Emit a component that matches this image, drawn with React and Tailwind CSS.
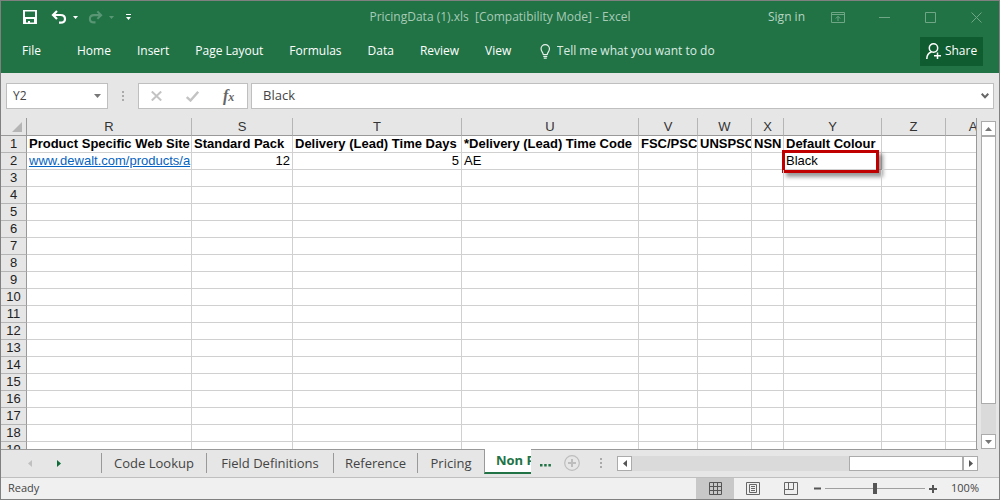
import React, { useLayoutEffect, useRef, useState } from 'react';

const baseColumns = [
  { id: 'R', w: 165 },
  { id: 'S', w: 101 },
  { id: 'T', w: 169 },
  { id: 'U', w: 177 },
  { id: 'V', w: 59 },
  { id: 'W', w: 54 },
  { id: 'X', w: 32 },
  { id: 'Y', w: 98 },
  { id: 'Z', w: 64 },
];

const ROW_HEADER_WIDTH = 26;
const COLUMN_WIDTH = 64;
const ROW_HEIGHT = 17;

const headings = {
  R: 'Product Specific Web Site',
  S: 'Standard Pack',
  T: 'Delivery (Lead) Time Days',
  U: '*Delivery (Lead) Time Code',
  V: 'FSC/PSC',
  W: 'UNSPSC',
  X: 'NSN',
  Y: 'Default Colour',
};

const menu = ['Home', 'Insert', 'Page Layout', 'Formulas', 'Data', 'Review', 'View'];

function sumWidths(columns) {
  return columns.reduce((total, c) => total + c.w, ROW_HEADER_WIDTH);
}

// Columns needed to fill the given width, continuing with AA, AB, AC ...
function columnsFor(width) {
  const columns = [...baseColumns];
  for (let i = 0; sumWidths(columns) < width; i++) {
    const id = String.fromCharCode(65 + Math.floor(i / 26)) + String.fromCharCode(65 + (i % 26));
    columns.push({ id, w: COLUMN_WIDTH });
  }
  return columns;
}

function TitleBar() {
  return (
    <div className="relative flex h-8 items-center">
      <div className="flex items-center pl-[22px]">
        <button aria-label="Save" className="block">
          <svg width="14" height="14" viewBox="0 0 14 14" fill="#fff" fillRule="evenodd">
            <path d="M0 0H14V14H0ZM2 1.500V7H12V1.500ZM3 9V12.500H5V11H7V12.500H11V9Z" />
          </svg>
        </button>
        <button aria-label="Undo" className="ml-[14px] flex items-center gap-[6px]">
          <svg width="16" height="14" viewBox="0 0 16 14" fill="none" stroke="#fff" strokeWidth="2.200">
            <path d="M6 1L2 5L6 9M2.500 5H9.500C12.500 5 14 6.800 14 9C14 11.300 12.300 12.700 9.500 12.700H8" />
          </svg>
          <svg width="5" height="3" viewBox="0 0 5 3" fill="#fff"><path d="M0 0H5L2.500 3Z" /></svg>
        </button>
        <button aria-label="Redo" className="ml-[10px] flex items-center gap-[6px] opacity-25">
          <svg width="15" height="14" viewBox="0 0 16 14" fill="none" stroke="#fff" strokeWidth="2.200">
            <path d="M10 1L14 5L10 9M13.500 5H6.500C3.500 5 2 6.800 2 9C2 11.300 3.700 12.700 6.500 12.700H8" />
          </svg>
          <svg width="5" height="3" viewBox="0 0 5 3" fill="#fff"><path d="M0 0H5L2.500 3Z" /></svg>
        </button>
        <button aria-label="Customize Quick Access Toolbar" className="ml-3 block">
          <svg width="5" height="6" viewBox="0 0 5 6" fill="#fff"><path d="M0 0H5V1H0ZM0 3H5L2.500 6Z" /></svg>
        </button>
      </div>
      <h1 className="pointer-events-none absolute inset-x-0 text-center text-xs whitespace-pre text-[#a8cbb6]">
        {'PricingData (1).xls  [Compatibility Mode] - Excel'}
      </h1>
      <div className="ml-auto flex items-center pr-[17px] text-[#6fa686]">
        <button className="text-xs text-[#b5d3c1]">Sign in</button>
        <button aria-label="Ribbon Display Options" className="ml-[26px] block">
          <svg width="14" height="11" viewBox="0 0 14 11" fill="none" stroke="currentColor">
            <path d="M.5 .5H13.500V10.500H.5ZM.5 2.500H13.500M7 9V4.500M4.800 6.500L7 4.300L9.200 6.500" />
          </svg>
        </button>
        <button aria-label="Minimize" className="ml-[34px] block">
          <svg width="11" height="11" viewBox="0 0 11 11" fill="none" stroke="currentColor"><path d="M0 5.500H11" /></svg>
        </button>
        <button aria-label="Maximize" className="ml-[35px] block">
          <svg width="11" height="11" viewBox="0 0 11 11" fill="none" stroke="currentColor"><path d="M.5 .5H10.500V10.500H.5Z" /></svg>
        </button>
        <button aria-label="Close" className="ml-[35px] block">
          <svg width="11" height="11" viewBox="0 0 11 11" fill="none" stroke="currentColor"><path d="M.5 .5L10.500 10.500M10.500 .5L.5 10.500" /></svg>
        </button>
      </div>
    </div>
  );
}

function RibbonTabs() {
  return (
    <nav className="flex h-10 items-center pb-1 text-xs text-white">
      <button className="ml-[21px]">File</button>
      <div className="ml-9 flex gap-[26px]">
        {menu.map((m) => (
          <button key={m}>{m}</button>
        ))}
      </div>
      <label className="ml-[29px] flex flex-1 items-center gap-[6px]">
        <svg width="11" height="15" viewBox="0 0 10 15" fill="none" stroke="#e6f0ea" strokeWidth="1.200">
          <path d="M3 10.500C3 8.500 .8 7.500 .8 4.800C.8 2.500 2.600 .7 5 .7S9.200 2.500 9.200 4.800C9.200 7.500 7 8.500 7 10.500ZM3 12.300H7M3.500 14.200H6.500" />
        </svg>
        <input
          aria-label="Tell me what you want to do"
          placeholder="Tell me what you want to do"
          className="w-full min-w-0 bg-transparent outline-none placeholder:text-[#dcebe2]"
        />
      </label>
      <button className="mr-4 flex h-[29px] w-[63px] items-center justify-center gap-1 bg-[#0e5c2f]">
        <svg width="15" height="16" viewBox="0 0 15 16" fill="none" stroke="#fff" strokeWidth="1.500">
          <circle cx="7.500" cy="5" r="4.200" />
          <path d="M.8 16C.8 12 2.800 9.800 5.500 9M11.500 9.500V16M8 12.700H15" />
        </svg>
        Share
      </button>
    </nav>
  );
}

function FormulaBar() {
  return (
    <div className="flex h-[45px] items-start px-[5px] pt-[10px]">
      <div className="flex h-[26px] w-[102px] items-center border border-[#bfbfbf] bg-white">
        <input aria-label="Name Box" defaultValue="Y2" className="w-full min-w-0 bg-transparent pl-[6px] text-xs text-[#444] outline-none" />
        <button aria-label="Name list" className="mr-[6px] block">
          <svg width="7" height="4" viewBox="0 0 7 4" fill="#777"><path d="M0 0H7L3.500 4Z" /></svg>
        </button>
      </div>
      <svg className="mx-[14px] mt-2" width="2" height="10" viewBox="0 0 2 10" fill="#aaa">
        <path d="M0 0H2V2H0ZM0 4H2V6H0ZM0 8H2V10H0Z" />
      </svg>
      <div className="flex h-[26px] w-[110px] items-center border border-[#bfbfbf] bg-white">
        <button aria-label="Cancel" className="ml-3 block">
          <svg width="11" height="10" viewBox="0 0 11 10" fill="none" stroke="#c3c3c3" strokeWidth="2"><path d="M.8 .5L10.200 9.500M10.200 .5L.8 9.500" /></svg>
        </button>
        <button aria-label="Enter" className="ml-6 block">
          <svg width="13" height="11" viewBox="0 0 13 11" fill="none" stroke="#c3c3c3" strokeWidth="2.400"><path d="M.8 6L4.500 9.500L12.200 .8" /></svg>
        </button>
        <button aria-label="Insert Function" className="ml-6 font-['Liberation_Serif',serif] text-base leading-4 font-bold text-[#666] italic">
          f<span className="text-xs">x</span>
        </button>
      </div>
      <div className="ml-[3px] flex h-[26px] flex-1 items-center border border-[#bfbfbf] bg-white">
        <input aria-label="Formula" defaultValue="Black" className="w-full min-w-0 bg-transparent pl-[11px] text-[13px] text-[#444] outline-none" />
        <button aria-label="Expand formula bar" className="mr-1 block">
          <svg width="8" height="6" viewBox="0 0 8 6" fill="none" stroke="#666" strokeWidth="2"><path d="M.7 .8L4 4.200L7.300 .8" /></svg>
        </button>
      </div>
    </div>
  );
}

function cellContent(row, id) {
  if (row === 1) return headings[id];
  if (row !== 2) return null;
  if (id === 'R')
    return (
      <a href="#products" className="block overflow-hidden text-[#0563c1] underline">
        www.dewalt.com/products/a
      </a>
    );
  if (id === 'S') return '12';
  if (id === 'T') return '5';
  if (id === 'U') return 'AE';
  if (id === 'Y')
    return (
      <>
        Black
        <span className="pointer-events-none absolute -top-[3px] -left-[2px] h-[23px] w-[97px] border-3 border-[#c00000] shadow-[4px_4px_4px_rgba(0,0,0,0.4)]" />
      </>
    );
  return null;
}

function Sheet() {
  const ref = useRef(null);
  const [size, setSize] = useState({ width: 0, height: 0 });

  useLayoutEffect(() => {
    const measure = () => setSize({ width: ref.current.clientWidth, height: ref.current.clientHeight });
    measure();
    window.addEventListener('resize', measure);
    return () => window.removeEventListener('resize', measure);
  }, []);

  const columns = columnsFor(size.width);
  const rowCount = Math.max(2, Math.ceil((size.height - 18) / ROW_HEIGHT));
  const rows = Array.from({ length: rowCount }, (_, i) => i + 1);

  return (
    <div ref={ref} className="min-w-0 flex-1 overflow-hidden border-r border-[#999] bg-white">
      <table
        style={{ width: sumWidths(columns) }}
        className="table-fixed border-separate border-spacing-0 font-['Liberation_Sans',Arial,sans-serif] text-[13px] leading-4 text-black"
      >
        <colgroup>
          <col style={{ width: ROW_HEADER_WIDTH }} />
          {columns.map((c) => (
            <col key={c.id} style={{ width: c.w }} />
          ))}
        </colgroup>
        <thead>
          <tr className="h-[18px] bg-[#e6e6e6]">
            <th aria-label="Select all" className="border-r border-b border-[#999] p-0">
              <svg className="mr-1 ml-auto" width="10" height="10" viewBox="0 0 10 10" fill="#b5b5b5"><path d="M10 0V10H0Z" /></svg>
            </th>
            {columns.map((c) => (
              <th key={c.id} scope="col" className="border-r border-b border-r-[#b5b5b5] border-b-[#999] p-0 font-normal text-[#333]">
                {c.id}
              </th>
            ))}
          </tr>
        </thead>
        <tbody>
          {rows.map((r) => (
            <tr key={r} className="h-[17px]">
              <th scope="row" className="border-r border-b border-r-[#999] border-b-[#b5b5b5] bg-[#e6e6e6] p-0 font-normal text-[#222]">
                {r}
              </th>
              {columns.map((c) => (
                <td
                  key={c.id}
                  className={
                    'relative border-r border-b border-[#d0d0d0] p-0 pl-[2px] whitespace-nowrap ' +
                    (r === 2 && c.id === 'Y' ? '' : 'overflow-hidden ') +
                    (r === 1 ? 'font-bold ' : '') +
                    (r === 2 && (c.id === 'S' || c.id === 'T') ? 'pr-[2px] text-right' : '')
                  }
                >
                  {cellContent(r, c.id)}
                </td>
              ))}
            </tr>
          ))}
        </tbody>
      </table>
    </div>
  );
}

function VerticalScroll() {
  return (
    <div className="mt-[3px] mr-[3px] ml-1 flex w-[15px] flex-col bg-[#dadada]">
      <button aria-label="Scroll up" className="flex h-[15px] items-center justify-center border border-[#ababab] bg-white">
        <svg width="7" height="4" viewBox="0 0 7 4" fill="#777"><path d="M0 4H7L3.500 0Z" /></svg>
      </button>
      <div className="flex-1">
        <div className="h-[90%] border border-[#ababab] bg-white" />
      </div>
      <button aria-label="Scroll down" className="flex h-[15px] items-center justify-center border border-[#ababab] bg-white">
        <svg width="7" height="4" viewBox="0 0 7 4" fill="#777"><path d="M0 0H7L3.500 4Z" /></svg>
      </button>
    </div>
  );
}

function SheetTabs() {
  const tab = 'h-5 border-l border-[#999] text-[13px] leading-[18px]';
  return (
    <div className="flex h-[29px] border-b border-[#bfbfbf]">
      <div className="mr-[21px] flex min-w-0 flex-1 border-t border-[#999]">
        <div className="flex w-[100px] items-center pb-px pl-[27px]">
          <button aria-label="Previous sheet" className="block">
            <svg width="4" height="7" viewBox="0 0 4 7" fill="#c0c0c0"><path d="M4 0V7L0 3.500Z" /></svg>
          </button>
          <button aria-label="Next sheet" className="ml-[25px] block">
            <svg width="4" height="7" viewBox="0 0 4 7" fill="#0e6b3a"><path d="M0 0V7L4 3.500Z" /></svg>
          </button>
        </div>
        <div className="flex pt-[3px] text-[#444]">
          <button className={tab + ' w-[105px]'}>Code Lookup</button>
          <button className={tab + ' w-[127px]'}>Field Definitions</button>
          <button className={tab + ' w-[84px]'}>Reference</button>
          <button className={tab + ' w-[67px]'}>Pricing</button>
        </div>
        <button className="-mt-px h-[25px] w-[47px] overflow-hidden border-b-2 border-l border-b-[#217346] border-l-[#999] bg-white pl-[11px] text-left text-[13px] font-bold whitespace-nowrap text-[#217346]">
          Non Pricing
        </button>
        <button aria-label="More sheets" className="ml-[9px] flex items-center pt-[3px]">
          <svg width="11" height="3" viewBox="0 0 11 3" fill="#217346"><path d="M0 0H2.500V2.500H0ZM4.200 0H6.700V2.500H4.200ZM8.400 0H10.900V2.500H8.400Z" /></svg>
        </button>
        <button aria-label="New sheet" className="ml-[13px] flex items-center pb-px">
          <svg width="16" height="16" viewBox="0 0 16 16" fill="none" stroke="#bdbdbd" strokeWidth="1.200">
            <circle cx="8" cy="8" r="7.300" />
            <path d="M8 4V12M4 8H12" strokeWidth="2" />
          </svg>
        </button>
        <svg className="mt-2 ml-5 shrink-0" width="2" height="10" viewBox="0 0 2 10" fill="#aaa">
          <path d="M0 0H2V2H0ZM0 4H2V6H0ZM0 8H2V10H0Z" />
        </svg>
        <div className="mt-[6px] ml-[15px] flex h-[15px] flex-1 justify-between bg-[#dadada]">
          <button aria-label="Scroll left" className="flex w-[15px] items-center justify-center border border-[#ababab] bg-white">
            <svg width="4" height="7" viewBox="0 0 4 7" fill="#555"><path d="M4 0V7L0 3.500Z" /></svg>
          </button>
          <div className="flex">
            <div className="w-[114px] border border-[#ababab] bg-white" />
            <button aria-label="Scroll right" className="flex w-[15px] items-center justify-center border border-[#ababab] bg-white">
              <svg width="4" height="7" viewBox="0 0 4 7" fill="#555"><path d="M0 0V7L4 3.500Z" /></svg>
            </button>
          </div>
        </div>
      </div>
    </div>
  );
}

function StatusBar() {
  const view = 'flex h-full w-[38px] items-center justify-center';
  return (
    <footer className="flex h-[21px] items-center bg-[#f0f0f0] text-[11px] text-[#444]">
      <span className="ml-[7px]">Ready</span>
      <div className="ml-auto flex h-full">
        <button aria-label="Normal view" className={view + ' bg-[#c8c8c8]'}>
          <svg width="13" height="13" viewBox="0 0 13 13" fill="none" stroke="#555"><path d="M.5 .5H12.500V12.500H.5ZM4.500 0V13M8.500 0V13M0 4.500H13M0 8.500H13" /></svg>
        </button>
        <button aria-label="Page layout view" className={view}>
          <svg width="14" height="13" viewBox="0 0 14 13" fill="none" stroke="#666"><path d="M.5 .5H13.500V12.500H.5ZM3.500 2.500H10.500V10.500H3.500ZM5 4.500H9M5 6.500H9M5 8.500H9" /></svg>
        </button>
        <button aria-label="Page break preview" className={view}>
          <svg width="14" height="13" viewBox="0 0 14 13" fill="none" stroke="#666"><path d="M.5 .5H13.500V12.500H.5ZM4.500 .5V7.500M9.500 .5V7.500M.5 7.500H9.500" /></svg>
        </button>
      </div>
      <button aria-label="Zoom out" className="ml-1 block">
        <svg width="7" height="9" viewBox="0 0 7 9" fill="#555"><path d="M0 3.500H7V5.500H0Z" /></svg>
      </button>
      <input
        type="range"
        aria-label="Zoom"
        min="0"
        max="200"
        defaultValue="100"
        className="mx-1 h-[11px] w-[100px] appearance-none bg-transparent bg-[linear-gradient(#a0a0a0,#a0a0a0)] bg-[length:100%_1px] bg-center bg-no-repeat [&::-webkit-slider-thumb]:h-[11px] [&::-webkit-slider-thumb]:w-1 [&::-webkit-slider-thumb]:appearance-none [&::-webkit-slider-thumb]:bg-[#555]"
      />
      <button aria-label="Zoom in" className="block">
        <svg width="8" height="8" viewBox="0 0 8 8" fill="#555"><path d="M0 3H3V0H5V3H8V5H5V8H3V5H0Z" /></svg>
      </button>
      <button className="mr-5 ml-[14px]">100%</button>
    </footer>
  );
}

export default function App() {
  return (
    <div className="flex h-screen flex-col overflow-hidden border border-[#808080] bg-[#e6e6e6] font-['Open_Sans','Noto_Sans',sans-serif]">
      <header className="bg-[#217346]">
        <TitleBar />
        <RibbonTabs />
      </header>
      <FormulaBar />
      <main className="flex min-h-0 flex-1">
        <Sheet />
        <VerticalScroll />
      </main>
      <SheetTabs />
      <StatusBar />
    </div>
  );
}
